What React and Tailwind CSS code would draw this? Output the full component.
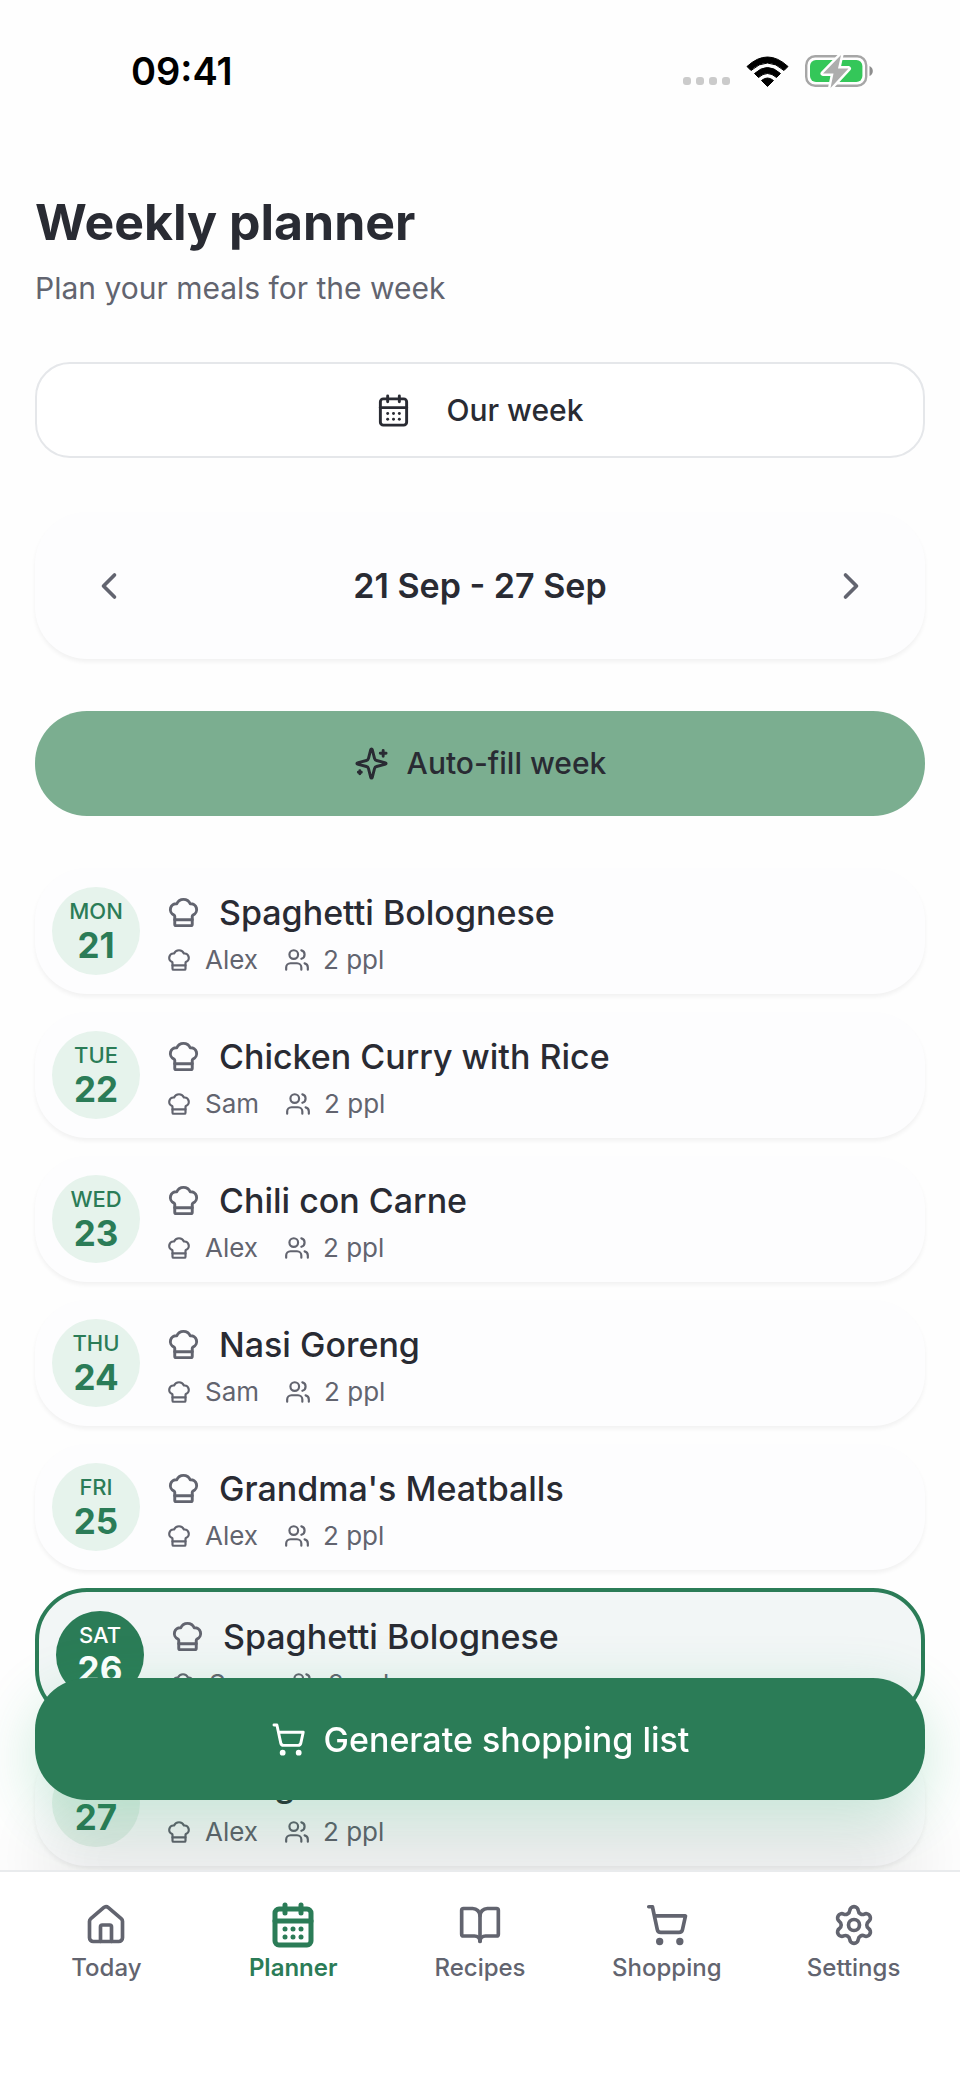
import React, { useState } from 'react';
import {
  BookOpen,
  CalendarDays,
  ChefHat,
  ChevronLeft,
  ChevronRight,
  House,
  ShoppingCart,
  Users,
} from 'lucide-react';

const days = [
  { day: 'MON', date: 21, meal: 'Spaghetti Bolognese', cook: 'Alex' },
  { day: 'TUE', date: 22, meal: 'Chicken Curry with Rice', cook: 'Sam' },
  { day: 'WED', date: 23, meal: 'Chili con Carne', cook: 'Alex' },
  { day: 'THU', date: 24, meal: 'Nasi Goreng', cook: 'Sam' },
  { day: 'FRI', date: 25, meal: "Grandma's Meatballs", cook: 'Alex' },
  { day: 'SAT', date: 26, meal: 'Spaghetti Bolognese', cook: 'Sam' },
  { day: 'SUN', date: 27, meal: 'Burgers', cook: 'Alex' },
];

const SparkleIcon = ({ className }) => (
  <svg className={className} viewBox="0 0 24 24" fill="none" stroke="currentColor" strokeWidth="2" strokeLinecap="round" strokeLinejoin="round" aria-hidden="true">
    <path d="M9.937 15.5A2 2 0 0 0 8.5 14.063l-6.135-1.582a.5.5 0 0 1 0-.962L8.5 9.936A2 2 0 0 0 9.937 8.5l1.582-6.135a.5.5 0 0 1 .963 0L14.063 8.5A2 2 0 0 0 15.5 9.937l6.135 1.581a.5.5 0 0 1 0 .964L15.5 14.063a2 2 0 0 0-1.437 1.437l-1.582 6.135a.5.5 0 0 1-.963 0z" />
    <path d="M20 3v4M22 5h-4" />
    <path d="M4 17v2M5 18H3" />
  </svg>
);

const GearIcon = ({ className }) => (
  <svg className={className} viewBox="0 0 24 24" fill="none" stroke="currentColor" strokeWidth="2" strokeLinecap="round" strokeLinejoin="round" aria-hidden="true">
    <path d="M9.671 4.136a2.34 2.34 0 0 1 4.659 0 2.34 2.34 0 0 0 3.319 1.915 2.34 2.34 0 0 1 2.33 4.033 2.34 2.34 0 0 0 0 3.831 2.34 2.34 0 0 1-2.33 4.033 2.34 2.34 0 0 0-3.319 1.915 2.34 2.34 0 0 1-4.659 0 2.34 2.34 0 0 0-3.32-1.915 2.34 2.34 0 0 1-2.33-4.033 2.34 2.34 0 0 0 0-3.831A2.34 2.34 0 0 1 6.35 6.051a2.34 2.34 0 0 0 3.319-1.915" />
    <circle cx="12" cy="12" r="3" />
  </svg>
);

const StatusBar = () => (
  <div className="flex items-center justify-between pl-[131px] pr-[87px] pt-[46px] h-[96px]">
    <span className="text-[38px] leading-[44px] font-semibold text-black">09:41</span>
    <div className="flex items-center gap-4">
      <div className="flex gap-[5px] pt-5">
        <span className="size-2 rounded-[3px] bg-[#cbcbcb]" />
        <span className="size-2 rounded-[3px] bg-[#cbcbcb]" />
        <span className="size-2 rounded-[3px] bg-[#cbcbcb]" />
        <span className="size-2 rounded-[3px] bg-[#cbcbcb]" />
      </div>
      <svg className="w-[43px] h-[31px]" viewBox="0 0 43 31" aria-hidden="true">
        <path d="M1 10.5Q21.5 -8.5 42 10.5L38 14.5Q21.5 -0.5 5 14.5Z" fill="#000" stroke="#000" strokeWidth="1" strokeLinejoin="round" />
        <path d="M8.5 17.5Q21.5 5.5 34.5 17.5L30.5 21.5Q21.5 13.5 12.5 21.5Z" fill="#000" stroke="#000" strokeWidth="1" strokeLinejoin="round" />
        <path d="M15.5 24.5Q21.5 19.5 27.5 24.5L21.5 30.5Z" fill="#000" stroke="#000" strokeWidth="1" strokeLinejoin="round" />
      </svg>
      <svg className="w-[68px] h-[34px]" viewBox="0 0 68 34" aria-hidden="true">
        <rect x="1.2" y="2.2" width="60" height="29.6" rx="9" fill="none" stroke="#a6a6a6" strokeWidth="2.4" />
        <rect x="5" y="6" width="52.4" height="22" rx="6" fill="#34c759" />
        <path d="M64.5 12v10q3.3-1.5 3.3-5t-3.3-5Z" fill="#8e8e8e" />
        <path d="M36 1 18 19.5h10.5L25.5 34 43.5 14.5H33Z" fill="#adadad" stroke="#fff" strokeWidth="5" strokeLinejoin="round" paintOrder="stroke" />
      </svg>
    </div>
  </div>
);

const DayRow = ({ item, selected, onSelect }) => (
  <button
    type="button"
    onClick={onSelect}
    className={`flex w-full items-center gap-[26px] rounded-[52px] px-[17px] py-[19px] text-left ${
      selected
        ? 'border-4 border-[#2b7c57] bg-[#f2f6f6]'
        : 'bg-[#fdfdfe] shadow-[0_3px_4px_rgba(0,0,0,0.05)]'
    }`}
  >
    <span
      className={`flex size-[88px] shrink-0 flex-col items-center justify-center rounded-full pb-[3px] ${
        selected ? 'bg-[#2b7c57] text-white' : 'bg-[#e6f3ec] text-[#2b7c57]'
      }`}
    >
      <span className="text-[22px] leading-[30px] font-medium">{item.day}</span>
      <span className="text-[35px] leading-[38px] font-bold">{item.date}</span>
    </span>
    <span className="flex flex-col gap-[10px] pt-[3px]">
      <span className="flex items-center gap-[18px]">
        <ChefHat className="size-[35px] text-[#62646f]" />
        <span className="text-[34px] leading-[44px] font-medium text-[#292b33]">{item.meal}</span>
      </span>
      <span className="flex items-center gap-[26px] text-[26px] leading-[30px] text-[#62646f]">
        <span className="flex items-center gap-[13px]">
          <ChefHat className="size-[26px]" />
          {item.cook}
        </span>
        <span className="flex items-center gap-[13px]">
          <Users className="size-[26px]" />
          2 ppl
        </span>
      </span>
    </span>
  </button>
);

const tabs = [
  { name: 'Today', icon: House },
  { name: 'Planner', icon: CalendarDays },
  { name: 'Recipes', icon: BookOpen },
  { name: 'Shopping', icon: ShoppingCart },
  { name: 'Settings', icon: GearIcon },
];

const TabBar = () => (
  <nav className="fixed inset-x-0 bottom-0 flex h-[216px] items-start border-t-2 border-[#e9ebed] bg-white px-[13px] pt-7">
    {tabs.map(({ name, icon: Icon }) => {
      const active = name === 'Planner';
      return (
        <a
          key={name}
          href={`#${name.toLowerCase()}`}
          className={`flex flex-1 flex-col items-center gap-[2px] text-[24px] leading-8 ${
            active ? 'font-semibold text-[#2b7c57]' : 'font-medium text-[#62646f]'
          }`}
        >
          <span className="flex h-[50px] items-center">
            <Icon className={active ? 'size-12' : 'size-11'} strokeWidth={active ? 2.5 : 2} />
          </span>
          {name}
        </a>
      );
    })}
  </nav>
);

const App = () => {
  const [selected, setSelected] = useState(26);

  return (
    <div className="min-h-screen bg-[#fefefe] pb-[200px] font-['Inter',sans-serif] text-[#292b33]">
      <StatusBar />

      <main className="px-[35px] pt-[94px]">
        <h1 className="text-[50px] leading-[64px] font-bold">Weekly planner</h1>
        <p className="mt-3 text-[30px] leading-[44px] text-[#62646f]">Plan your meals for the week</p>

        <button
          type="button"
          className="mt-[52px] flex h-[96px] w-full items-center justify-center gap-[35px] rounded-[35px] border-2 border-[#e5e7ea] bg-white text-[30px] font-medium"
        >
          <CalendarDays className="size-[35px]" />
          Our week
        </button>

        <div className="mt-[54px] flex h-[147px] items-center justify-between rounded-[52px] bg-[#fdfdfe] px-[52px] shadow-[0_3px_4px_rgba(0,0,0,0.05)]">
          <button type="button" aria-label="Previous week" className="text-[#62646f]">
            <ChevronLeft className="size-11" />
          </button>
          <h2 className="text-[34px] leading-[44px] font-semibold">21 Sep - 27 Sep</h2>
          <button type="button" aria-label="Next week" className="text-[#62646f]">
            <ChevronRight className="size-11" />
          </button>
        </div>

        <button
          type="button"
          className="mt-[52px] flex h-[105px] w-full items-center justify-center gap-[18px] rounded-[52px] bg-[#7bae90] text-[30px] font-medium"
        >
          <SparkleIcon className="size-[35px]" />
          Auto-fill week
        </button>

        <div className="mt-[52px] flex flex-col gap-[18px]">
          {days.map((item) => (
            <DayRow
              key={item.date}
              item={item}
              selected={item.date === selected}
              onSelect={() => setSelected(item.date)}
            />
          ))}
        </div>
      </main>

      {/* Floating action above the tab bar */}
      <div className="fixed inset-x-0 bottom-[286px] px-[35px]">
        <button
          type="button"
          className="flex h-[122px] w-full items-center justify-center gap-[18px] rounded-[52px] bg-[#2b7c57] text-[34px] font-medium text-white shadow-[0_18px_60px_rgba(43,175,110,0.24),0_120px_70px_rgba(0,0,0,0.07)]"
        >
          <ShoppingCart className="size-[35px]" />
          Generate shopping list
        </button>
      </div>

      <TabBar />
    </div>
  );
};

export default App;
